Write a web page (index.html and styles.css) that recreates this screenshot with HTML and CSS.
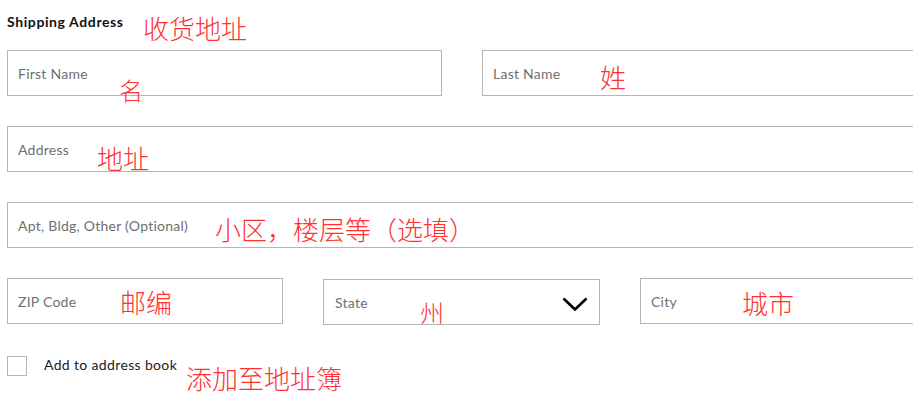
FILE: index.html
```html
<html>

<head>
    <title>Shipping Address</title>
    <link rel="stylesheet" href="styles.css">
</head>

<body>
    <div class="page">
        <form class="form">
            <h3 class="title">Shipping Address</h3>

            <div class="row two">
                <input class="field" type="text" placeholder="First Name">
                <input class="field" type="text" placeholder="Last Name">
            </div>

            <div class="row">
                <input class="field" type="text" placeholder="Address">
            </div>

            <div class="row">
                <input class="field" type="text" placeholder="Apt, Bldg, Other (Optional)">
            </div>

            <div class="row three">
                <input class="field" type="text" placeholder="ZIP Code">
                <div class="field select">
                    <span>State</span>
                    <svg class="chevron" width="26" height="14" viewBox="0 0 26 14" fill="none" xmlns="http://www.w3.org/2000/svg">
                        <path d="M1.5 1.5L13 12.5L24.5 1.5" stroke="#000" stroke-width="2.6" />
                    </svg>
                </div>
                <input class="field" type="text" placeholder="City">
            </div>

            <label class="check">
                <span class="box"></span>
                <span class="check-text">Add to address book</span>
            </label>
        </form>

        <!-- 标注 -->
        <span class="note" style="left:143px; top:13px;">收货地址</span>
        <span class="note small" style="left:119px; top:75px;">名</span>
        <span class="note" style="left:600px; top:62px;">姓</span>
        <span class="note" style="left:97px; top:143px;">地址</span>
        <span class="note" style="left:215px; top:214px;">小区，楼层等（选填）</span>
        <span class="note" style="left:120px; top:287px;">邮编</span>
        <span class="note small" style="left:420px; top:297px;">州</span>
        <span class="note" style="left:742px; top:288px;">城市</span>
        <span class="note" style="left:186px; top:363px;">添加至地址簿</span>
    </div>
</body>

</html>
```

FILE: styles.css
```css
* {
    box-sizing: border-box;
    margin: 0;
    padding: 0;
}

body {
    background: #ffffff;
    overflow: hidden;
    font-family: Lato, "Open Sans", sans-serif;
}

.page {
    position: relative;
    width: 913px;
    height: 406px;
    overflow: hidden;
}

.form {
    width: 910px;
    padding: 12px 0 0 7px;
    box-sizing: content-box;
}

.title {
    font-size: 14px;
    font-weight: 700;
    line-height: 20px;
    letter-spacing: 0.6px;
    color: #111111;
    margin-bottom: 18px;
}

.row {
    display: grid;
    grid-template-columns: 1fr;
    column-gap: 40px;
    margin-bottom: 30px;
}

.row.two {
    grid-template-columns: 435px 1fr;
}

.row.three {
    grid-template-columns: 276px 277px 1fr;
    margin-bottom: 31px;
}

.field {
    display: block;
    width: 100%;
    height: 46px;
    border: 1px solid #b5b5b5;
    background: #ffffff;
    padding: 0 10px;
    font-family: Lato, "Open Sans", sans-serif;
    font-size: 14px;
    letter-spacing: 0.25px;
    color: #333333;
    outline: none;
}

.field::placeholder {
    color: #6f6f6f;
}

/* 州 选择框 */
.select {
    display: flex;
    align-items: center;
    justify-content: space-between;
    margin-top: 1px;
    padding: 0 11px 0 11px;
    color: #6f6f6f;
}

.chevron {
    margin-top: 3px;
}

.check {
    display: flex;
    align-items: center;
    gap: 17px;
}

.box {
    width: 20px;
    height: 20px;
    border: 1px solid #b5b5b5;
}

.check-text {
    font-size: 14px;
    letter-spacing: 0.35px;
    color: #222222;
    margin-top: -4px;
}

/* 红色中文标注 */
.note {
    position: absolute;
    font-family: "Noto Sans CJK SC", sans-serif;
    font-weight: 300;
    font-size: 26px;
    line-height: 30px;
    color: #ff3030;
    white-space: nowrap;
}

.note.small {
    font-size: 24px;
}
```
